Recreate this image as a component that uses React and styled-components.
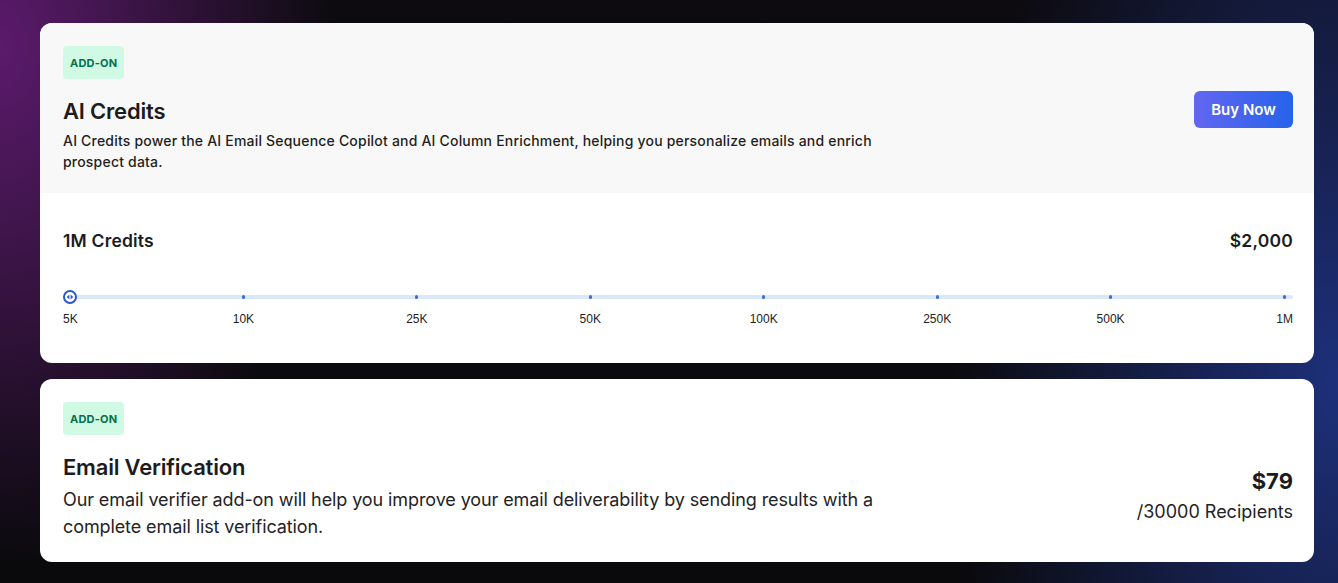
import styled, { createGlobalStyle } from 'styled-components';

const STOPS = ['5K', '10K', '25K', '50K', '100K', '250K', '500K', '1M'];

export default function App() {
  return (
    <Page>
      <GlobalStyle />

      {/* ── AI Credits ── */}
      <Card>
        <CardHead>
          <HeadInfo>
            <Badge>ADD-ON</Badge>
            <Title>AI Credits</Title>
            <Desc>
              AI Credits power the AI Email Sequence Copilot and AI Column Enrichment, helping you
              personalize emails and enrich prospect data.
            </Desc>
          </HeadInfo>
          <BuyButton>Buy Now</BuyButton>
        </CardHead>

        <CardBody>
          <AmountRow>
            <AmountLabel>1M Credits</AmountLabel>
            <AmountLabel>$2,000</AmountLabel>
          </AmountRow>

          <Slider>
            <Track>
              {STOPS.map((s, i) =>
                i === 0 ? null : <Tick key={s} style={{ left: `${(i / 7) * 100}%` }} />
              )}
              <Thumb>
                <ThumbArrows viewBox="0 0 10 10">
                  <path d="M4.4 2.4 L1.7 5 L4.4 7.6 Z" />
                  <path d="M5.6 2.4 L8.3 5 L5.6 7.6 Z" />
                </ThumbArrows>
              </Thumb>
            </Track>
            <Scale>
              {STOPS.map((s, i) => (
                <ScaleLabel
                  key={s}
                  $edge={i === 0 ? 'start' : i === 7 ? 'end' : 'mid'}
                  style={{ left: `${(i / 7) * 100}%` }}
                >
                  {s}
                </ScaleLabel>
              ))}
            </Scale>
          </Slider>
        </CardBody>
      </Card>

      {/* ── Email Verification ── */}
      <Card $plain>
        <Badge>ADD-ON</Badge>
        <VerifyRow>
          <HeadInfo>
            <Title>Email Verification</Title>
            <LargeDesc>
              Our email verifier add-on will help you improve your email deliverability by sending
              results with a complete email list verification.
            </LargeDesc>
          </HeadInfo>
          <PriceBox>
            <Price>$79</Price>
            <PriceUnit>/30000 Recipients</PriceUnit>
          </PriceBox>
        </VerifyRow>
      </Card>
    </Page>
  );
}

/* ── Styled Components ── */

const GlobalStyle = createGlobalStyle`
  * { box-sizing: border-box; }
  body {
    margin: 0;
    font-family: Inter, 'Noto Sans', sans-serif;
    background: #0b0a0e;
  }
`;

const Page = styled.div`
  min-height: 583px;
  padding: 23px 24px 23px 40px;
  display: flex;
  flex-direction: column;
  gap: 16px;
  background:
    radial-gradient(ellipse 460px 720px at 0% 8%, rgba(100, 28, 118, 0.9), transparent 72%),
    radial-gradient(ellipse 540px 900px at 100% 65%, rgba(30, 50, 128, 0.95), transparent 72%),
    linear-gradient(180deg, #0d0b10 0%, #0a0a0d 100%);
`;

const Card = styled.div`
  background: #ffffff;
  border-radius: 12px;
  overflow: hidden;
  display: flex;
  flex-direction: column;
  padding: ${({ $plain }) => ($plain ? '23px 21px 22px 23px' : '0')};
`;

const CardHead = styled.div`
  background: #f8f8f8;
  padding: 23px 21px 21px 23px;
  display: flex;
  align-items: center;
  justify-content: space-between;
`;

const HeadInfo = styled.div`
  display: flex;
  flex-direction: column;
  align-items: flex-start;
  max-width: 840px;
`;

const Badge = styled.span`
  display: inline-flex;
  align-items: center;
  align-self: flex-start;
  height: 33px;
  padding: 0 7px;
  background: #d1fae5;
  color: #04714a;
  border-radius: 4px;
  font-size: 11px;
  font-weight: 700;
  letter-spacing: 0.2px;
`;

const Title = styled.h2`
  margin: 18px 0 5px;
  font-size: 22px;
  line-height: 28px;
  font-weight: 600;
  color: #1c1c1e;
  letter-spacing: -0.2px;
`;

const Desc = styled.p`
  margin: 0;
  font-size: 14px;
  line-height: 21px;
  font-weight: 500;
  color: #1f1f22;
  letter-spacing: 0.2px;
`;

const LargeDesc = styled.p`
  margin: 0;
  font-size: 18px;
  line-height: 27px;
  font-weight: 400;
  color: #232326;
  letter-spacing: -0.1px;
`;

const BuyButton = styled.button`
  width: 99px;
  height: 37px;
  border: none;
  border-radius: 6px;
  background: linear-gradient(90deg, #6366f1 0%, #2563eb 100%);
  color: #ffffff;
  font-family: inherit;
  font-size: 15px;
  font-weight: 600;
  cursor: pointer;
  flex-shrink: 0;
`;

const CardBody = styled.div`
  padding: 36px 21px 0 23px;
  height: 170px;
  display: flex;
  flex-direction: column;
`;

const AmountRow = styled.div`
  display: flex;
  justify-content: space-between;
  align-items: center;
`;

const AmountLabel = styled.span`
  font-size: 17.5px;
  line-height: 24px;
  font-weight: 600;
  color: #1c1c1e;
  letter-spacing: 0.2px;
`;

const Slider = styled.div`
  margin-top: 42px;
  display: flex;
  flex-direction: column;
  gap: 12px;
`;

const Track = styled.div`
  position: relative;
  height: 4px;
  margin: 0 9px 0 7px;
  background: #dbe7fb;

  &::before {
    content: '';
    position: absolute;
    left: -7px;
    right: -9px;
    top: 0;
    bottom: 0;
    background: #dbe7fb;
    border-radius: 2px;
  }
`;

const Tick = styled.span`
  position: absolute;
  top: 50%;
  width: 3px;
  height: 4px;
  margin-left: -1.5px;
  margin-top: -2px;
  border-radius: 1.5px;
  background: #3a6fd8;
`;

const Thumb = styled.span`
  position: absolute;
  left: -7px;
  top: -5px;
  width: 14px;
  height: 14px;
  border-radius: 50%;
  border: 2px solid #2b59c9;
  background: #ffffff;
  display: flex;
  align-items: center;
  justify-content: center;
`;

const ThumbArrows = styled.svg`
  width: 10px;
  height: 10px;
  fill: #2b59c9;
`;

const Scale = styled.div`
  position: relative;
  height: 16px;
  margin: 0 9px 0 7px;
`;

const ScaleLabel = styled.span`
  position: absolute;
  top: 0;
  font-family: 'Liberation Sans', Arial, sans-serif;
  font-size: 12px;
  line-height: 16px;
  color: #222;
  white-space: nowrap;
  transform: ${({ $edge }) =>
    $edge === 'start'
      ? 'translateX(-7px)'
      : $edge === 'end'
        ? 'translateX(calc(-100% + 9px))'
        : 'translateX(-50%)'};
`;

const VerifyRow = styled.div`
  display: flex;
  align-items: center;
  justify-content: space-between;
`;

const PriceBox = styled.div`
  margin-top: 17px;
  display: flex;
  flex-direction: column;
  align-items: flex-end;
  gap: 3px;
`;

const Price = styled.span`
  font-size: 22px;
  line-height: 28px;
  font-weight: 700;
  color: #1c1c1e;
`;

const PriceUnit = styled.span`
  font-size: 18px;
  line-height: 27px;
  color: #232326;
`;
